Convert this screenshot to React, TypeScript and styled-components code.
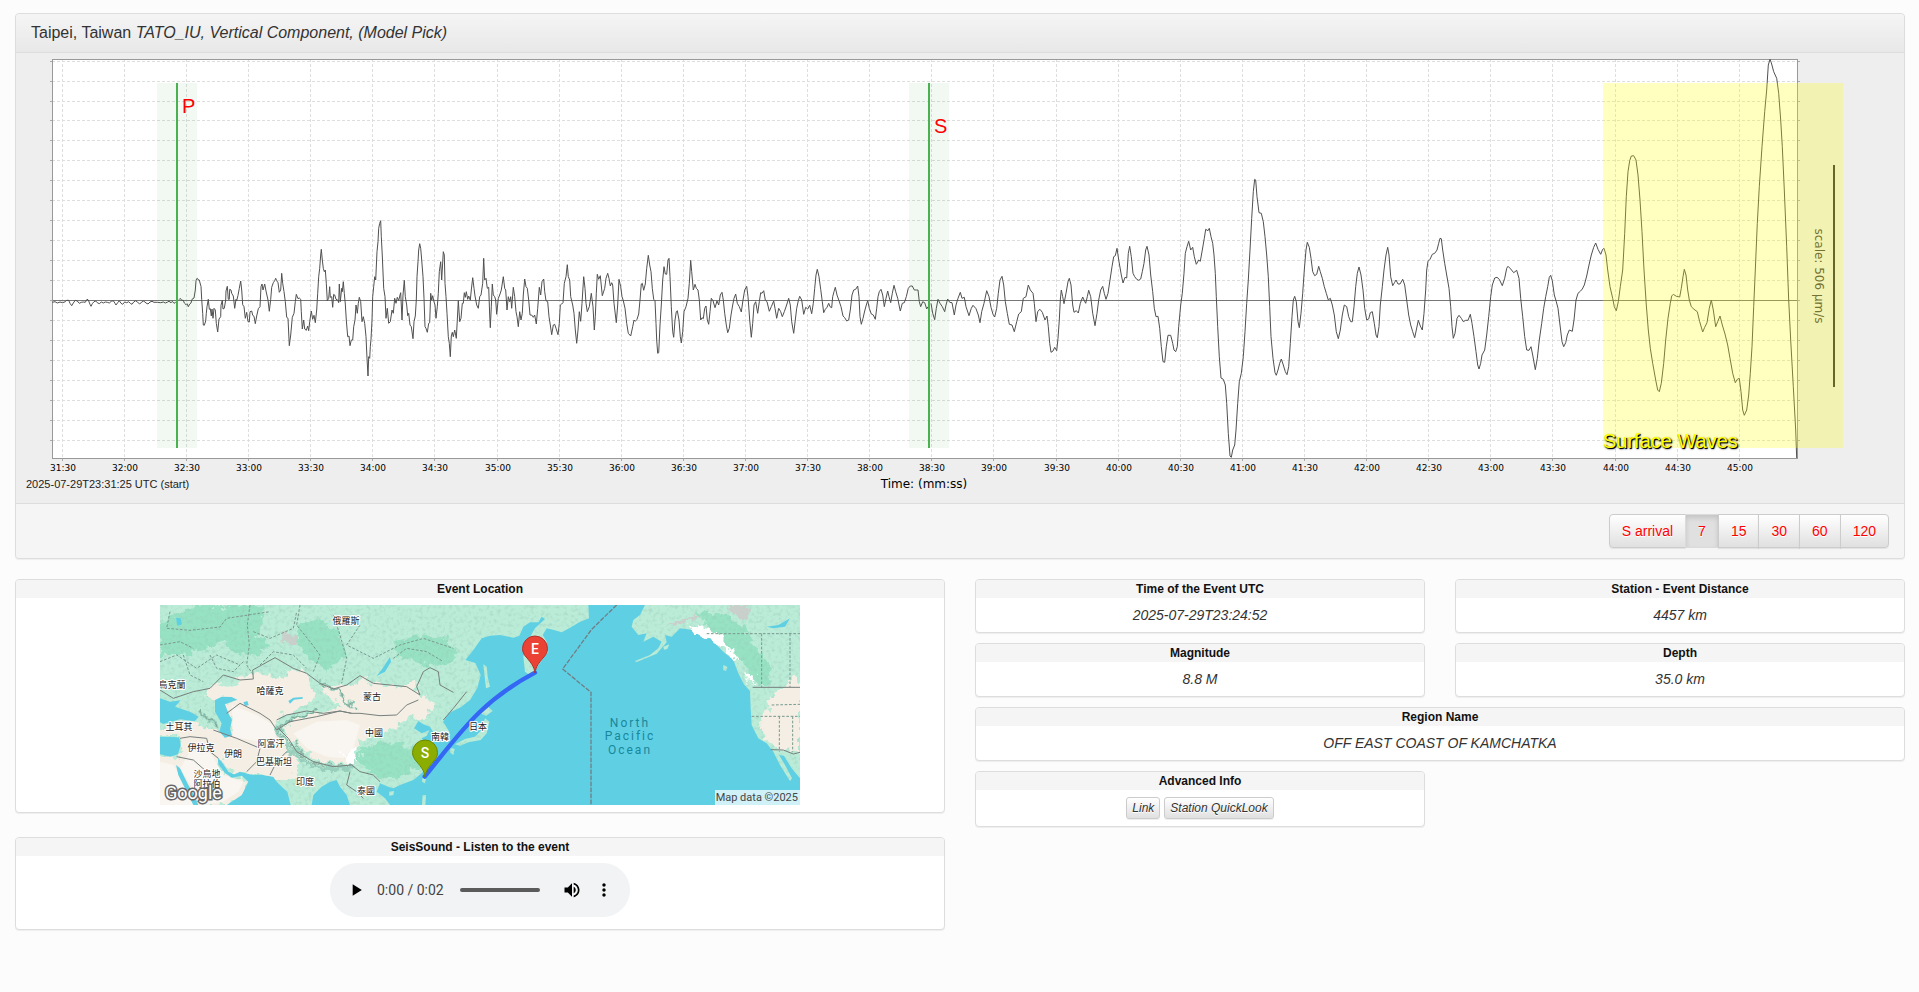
import React from "react";
import styled, { createGlobalStyle, css } from "styled-components";

const GlobalStyle = createGlobalStyle`
  *, *::before, *::after { box-sizing: border-box; }
  html { background: #fcfcfc; }
  body {
    margin: 0;
    background: #fcfcfc;
    color: #333;
    font: 14px/20px "Liberation Sans", Arial, sans-serif;
  }
  h1, h2, p { margin: 0; }
`;

const frame = css`
  border: 1px solid #ddd;
  border-radius: 4px;
  box-shadow: 0 1px 1px rgba(0, 0, 0, 0.06);
  overflow: hidden;
`;

const Page = styled.main`
  display: flex;
  flex-direction: column;
  gap: 20px;
  padding: 13px 14px 13px 15px;
`;

const Panel = styled.section`
  ${frame}
  background: #eee;
`;

const PanelHeader = styled.header`
  padding: 9px 15px;
  border-bottom: 1px solid #ddd;
  background: linear-gradient(#f5f5f5, #e8e8e8);
`;

const PanelTitle = styled.h1`
  font-size: 16px;
  font-weight: 400;
  line-height: 20px;
`;

const PanelFooter = styled.footer`
  display: flex;
  justify-content: flex-end;
  padding: 10px 15px;
  border-top: 1px solid #ddd;
  background: #f5f5f5;
`;

const Chart = styled.svg`
  display: block;
  width: 100%;
  height: auto;
`;

const BandLabel = styled.text`
  fill: #ff0;
  font: 20px "Liberation Sans", Arial, sans-serif;
  text-shadow: 1px 1px 0 #000, 1px 1px 2px #000;
`;

const ButtonGroup = styled.div`
  display: flex;
`;

const buttonFace = css`
  border: 1px solid #ccc;
  background: linear-gradient(#fff, #e0e0e0);
  text-shadow: 0 1px 0 #fff;
  box-shadow: inset 0 1px 0 rgba(255, 255, 255, 0.15), 0 1px 1px rgba(0, 0, 0, 0.075);
  cursor: pointer;
`;

const WindowButton = styled.button<{ $active?: boolean }>`
  ${buttonFace}
  margin: 0 0 0 -1px;
  padding: 6px 12px;
  color: #f00;
  font: 14px/20px "Liberation Sans", Arial, sans-serif;
  &:first-child { margin-left: 0; border-radius: 4px 0 0 4px; }
  &:last-child { border-radius: 0 4px 4px 0; }
  ${(p) =>
    p.$active &&
    css`
      background: #e0e0e0;
      border-color: #dbdbdb;
      box-shadow: inset 0 3px 5px rgba(0, 0, 0, 0.125);
    `}
`;

const Columns = styled.div`
  display: grid;
  grid-template-columns: 1fr 1fr;
  align-items: start;
  gap: 30px;
`;

const MediaColumn = styled.div`
  display: grid;
  gap: 24px;
`;

const FactGrid = styled.div`
  display: grid;
  grid-template-columns: 1fr 1fr;
  gap: 10px 30px;
`;

const CardFrame = styled.section<{ $wide?: boolean }>`
  ${frame}
  background: #fff;
  text-align: center;
  ${(p) => p.$wide && "grid-column: 1 / -1;"}
`;

const CardTitle = styled.h2`
  background: #f5f5f5;
  color: #111;
  font-size: 12px;
  font-weight: 700;
  line-height: 18px;
`;

const CardBody = styled.div<{ $bottom?: number }>`
  display: flex;
  justify-content: center;
  gap: 4px;
  padding: 7px 7px ${(p) => p.$bottom ?? 7}px;
`;

const Value = styled.p`
  font-style: italic;
`;

const SmallButton = styled.button`
  ${buttonFace}
  padding: 1px 5px;
  border-radius: 3px;
  color: #333;
  font: italic 12px/18px "Liberation Sans", Arial, sans-serif;
`;

const MapDrawing = styled.svg`
  display: block;
  width: 640px;
  max-width: 100%;
  height: auto;
`;

const Player = styled.div`
  display: flex;
  align-items: center;
  width: 300px;
  height: 54px;
  padding: 0 10px;
  border-radius: 27px;
  background: #f1f3f4;
`;

const IconButton = styled.button`
  display: grid;
  place-items: center;
  width: 32px;
  height: 32px;
  padding: 0;
  border: 0;
  background: none;
  cursor: pointer;
`;

const PlayerTime = styled.span`
  margin: 0 16px 0 5px;
  color: #444;
  font: 14px/20px Roboto, sans-serif;
  white-space: nowrap;
`;

const Seek = styled.input`
  flex: 1;
  min-width: 0;
  height: 4px;
  margin: 0 16px 0 0;
  border-radius: 2px;
  background: #5b5b5b;
  appearance: none;
  &::-webkit-slider-thumb { appearance: none; width: 0; height: 4px; }
`;

/* ---------- seismogram ---------- */

// Samples are x,y pairs at three units per chart pixel, relative to each segment's origin.
type Segment = { x: number; y: number; samples: string };

const beforeP: Segment[] = [
  {
    x: 40, y: 210,
    samples:
      "37,277 45,275 52,279 60,276 68,278 76,275 80,271 86,271 90,280 95,287 100,279 106,271 112,273 118,280 124,277 130,276 136,277 141,268 145,270 150,283 153,289 157,281 162,275 167,273 172,278 178,281 184,276 190,279 196,276 202,277 208,279 214,274 220,272 225,280 228,285 233,278 238,272 243,280 248,283 254,276 260,278 266,275 271,280 276,283 281,276 287,272 293,277 299,282 305,276 311,273 318,279 324,282 330,276 336,274 342,277 352,277 362,278 370,276 376,279 383,276 388,273 392,279 397,274 402,280 407,277",
  },
];

const betweenPAndS: Segment[] = [
  {
    x: 40, y: 210,
    samples:
      "417,269 421,265 425,271 430,271 433,279 438,284 441,281 445,290 449,282 453,279 456,268 462,264 466,240 468,212 470,206 472,205 474,209 478,210 481,222 483,229 485,268 488,310 490,345 493,346 497,333 499,310 501,290 505,268 508,298 511,296 514,318 516,297 519,325 522,295 526,300 529,340 533,366 537,327 542,320 543,286 547,271 549,297 553,295 557,270 558,243 562,229 565,268 568,268 569,238 573,240 575,250 580,258 584,295 588,268 590,272 594,256 598,235 602,213 605,240 608,284 612,290 616,325 620,307 624,335 628,336 630,305 635,303 638,316 642,319 646,341 650,318 655,296 660,290 663,230 666,222 669,240 674,222 678,243 684,270 688,304 692,268 695,232 700,218 704,212 707,205 710,212 714,218 718,247 722,240 725,190 728,220 732,245 736,275 740,322 744,325 748,407 752,375 757,322 762,310 766,275 769,253 774,266 778,264 782,268 784,305 787,357 791,330 794,357 799,361 803,348 806,362 809,335 814,303 818,328 822,316 826,338",
  },
  {
    x: 300, y: 180,
    samples:
      "50,390 53,340 56,290 59,265 62,225 64,208 67,240 70,265 73,275 76,270 79,310 82,362 86,355 89,320 91,352 95,350 98,382 101,343 104,345 108,358 113,360 116,368 118,312 121,365 125,325 127,335 130,305 133,340 136,372 139,420 143,470 147,468 150,497 154,480 158,480 161,440 165,420 168,375 172,400 175,370 178,352 182,365 186,425 190,410 194,430 198,470 201,535 204,588 206,530 209,535 211,500 213,478 216,420 218,350 221,320 224,290 227,300 231,215 234,185 236,145 239,130 242,122 244,170 247,228 251,325 255,350 258,415 262,385 266,430 271,425 276,390 280,400 284,355 288,370 292,352 296,362 300,345 302,338 306,420 309,345 313,301 316,350 320,375 323,407 326,400 330,435 334,440 339,476 342,425 346,408 349,360 351,290 354,245 356,210 359,191 362,205 365,240 369,290 372,355 375,440 378,445 382,457 386,430 389,428 392,340 395,360 398,347 401,362 405,375 408,415 412,380 415,340 418,275 422,245 425,300 430,215 433,225 435,310 438,350 441,400 445,470 448,490 451,530 454,468 457,457 460,470 464,450 469,475 472,420 475,362 479,425 483,415 487,370 490,370 493,338 496,352 499,335 503,358 506,348 511,360 514,330 518,293 522,325 525,348 530,375 535,385 539,350 543,345 548,310 551,235 554,300 558,295 562,325 566,322 569,405 571,443 574,380 577,312 580,345 584,350 587,360 590,403 595,355 599,345 604,330 610,290 614,325 617,330 621,390 625,350 629,365 632,350 635,385 640,322 644,350 648,395 651,410 655,440 659,395 663,420 667,400 670,345 674,297 678,320 682,325 686,360 690,405 695,405 700,412 704,405 709,432 713,385 718,322 722,345 726,305 731,297 734,335 738,362 743,365 747,410 751,435 755,464 760,435 764,433 768,445 774,464 778,430 781,375 785,372 789,368 793,310 798,290 802,254 805,290 809,300 812,350 818,375 822,400 826,450 830,490 834,450 838,395 842,424 846,370 851,290 855,325 858,370 862,395 868,380 874,340 879,380 883,450 886,410 889,340 892,283 896,298 901,287 907,347 914,325 918,295 923,280 927,295 931,318 935,308 938,315 942,370 949,428 953,375 957,298 962,320 966,350 970,362 975,385 980,430 985,460 992,468 998,440 1002,420 1006,424 1011,418 1016,402",
  },
  {
    x: 640, y: 180,
    samples:
      "0,360 4,312 7,310 11,331 16,312 20,265 25,226 29,255 33,275 37,325 41,358 45,362 48,430 50,480 53,520 56,518 60,435 64,375 68,300 72,260 76,282 80,283 84,240 87,235 90,290 94,380 98,455 101,472 105,420 109,395 112,392 117,420 121,470 124,489 128,455 132,395 138,380 144,355 148,310 152,241 155,275 160,330 165,313 169,325 174,330 178,360 182,420 186,413 190,416 194,385 198,378 202,420 206,433 210,395 214,355 219,362 225,383 231,363 236,375 241,345 246,337 250,360 254,400 259,435 263,458 268,445 273,405 278,375 282,355 287,342 292,370 298,380 304,396 309,360 314,330 320,319 324,350 329,420 334,472 338,430 342,375 347,365 353,400 358,365 362,338 366,340 371,332 376,360 381,365 388,394 394,380 401,363 405,385 410,415 416,385 422,395 427,410 433,395 439,378 446,355 451,375 455,425 461,460 466,420 470,385 475,362 479,349 485,360 491,403 497,382 503,387 509,376 515,401 520,370 524,325 528,285 532,268 537,290 542,328 547,365 551,398 556,388 561,382 566,370 570,380 575,383 578,350 582,335 586,322 591,345 597,362 603,380 609,408 614,413 620,423 626,420 631,390 636,345 641,330 647,328 653,318 657,350 660,410 664,433 669,415 674,393 679,375 683,362 688,385 694,402 700,405 706,418 710,385 714,350 718,335 723,328 728,345 733,380 738,355 743,333 747,350 752,368 757,340 762,316 767,335 773,355 777,375 781,393 787,370 793,368 799,350 805,325 811,318 817,318 823,330 829,330 834,330 838,365 842,380 848,365 854,368 860,387 864,380",
  },
];

const afterS: Segment[] = [
  {
    x: 640, y: 180,
    samples:
      "873,370 878,400 884,419 889,385 894,358 900,370 907,380 914,395 918,375 923,357 929,367 936,368 943,405 948,375 954,355 961,337 966,355 973,352 978,380 987,407 994,385 999,376 1008,386 1015,405 1020,428 1025,395 1032,370 1040,332 1047,350 1053,382 1059,403 1064,411 1070,385 1075,340 1080,300 1086,289 1091,315 1096,365 1102,400 1108,433 1116,435 1123,455 1130,425 1136,402 1144,395 1150,355 1158,350 1165,315 1171,330 1179,340 1183,370 1188,425 1193,395 1198,389",
  },
  {
    x: 1000, y: 150,
    samples:
      "120,478 127,487 135,510 141,498 145,530 149,580 153,607 159,603 164,592 170,602 174,565 178,510 181,450 184,420 188,440 192,461 198,430 204,395 208,385 213,405 218,465 222,487 229,482 235,489 241,460 248,441 252,450 257,460 262,440 266,421 272,440 278,490 285,527 291,490 296,450 302,420 308,409 313,430 318,448 324,430 330,390 336,350 341,320 346,317 351,295 357,335 364,375 369,399 375,382 380,384 385,310 389,289 394,320 399,370 404,380 410,388 416,391 422,387 427,365 432,340 437,300 441,289 447,315 452,375 458,425 463,475 468,500 474,499 479,535 484,590 489,635 494,637 499,590 504,556 512,556 518,580 522,600 527,605 532,590 536,530 542,465 547,430 552,370 556,310 561,290 566,274 572,300 578,292 583,320 589,343 596,330 601,334 607,300 613,265 617,238 624,242 628,235 633,260 638,280 642,315 646,370 649,440 653,530 658,620 663,684 670,688 676,705 680,760 685,850 690,918 694,922 698,900 704,885 708,840 713,760 718,695 724,670 730,620 735,545 740,460 745,390 750,300 755,205 760,125 764,88 767,90 771,140 777,188 784,190 790,215 795,260 800,315 805,380 809,470 813,560 819,625 825,668 829,676 834,660 839,640 844,627 850,645 856,665 861,674 866,650 871,580 876,500 880,450 884,439 889,455 894,515 898,533 903,490 908,430 913,360 918,300 922,277 928,292 933,325 938,365 944,377 950,373 956,349 961,365 967,385 973,410 979,430 985,450 991,445 997,465 1003,495 1009,545 1015,566 1021,540 1027,495 1033,465 1040,470 1046,500 1052,515 1057,515 1062,470 1067,410 1072,370 1077,351 1083,375 1089,420 1094,475 1100,510 1106,507 1111,488 1117,485 1123,520 1128,555 1132,563 1137,530 1141,465 1147,410 1152,360 1158,315 1163,292 1167,315 1172,380 1178,407 1184,397 1188,390 1194,402 1200,402 1208,388 1214,405 1220,450 1226,495 1232,525 1238,545 1244,563 1249,540 1255,511 1261,528 1267,540 1272,490 1277,420 1280,360 1284,334 1290,328 1297,313 1304,310 1311,300 1316,280",
  },
  {
    x: 1400, y: 40,
    samples:
      "120,595 124,596 128,630 134,670 140,705 147,745 152,800 156,860 160,895 165,880 171,835 177,826 184,835 190,845 197,841 204,841 211,823 216,850 222,890 228,935 233,975 237,987 242,970 246,945 254,930 260,885 266,830 272,770 277,735 284,714 291,712 298,718 307,737 314,715 320,685 324,679 332,687 341,698 350,691 357,715 362,775 368,830 374,890 380,930 387,931 393,920 398,945 406,989 412,955 418,900 425,850 431,805 437,770 443,740 448,712 452,706 457,722 463,765 469,785 474,805 480,855 486,905 491,920 497,908 502,885 508,870 517,874 522,840 528,780 534,760 541,754 547,747 553,735 560,708 567,675 574,645 581,622 587,609 594,628 602,643 608,628 612,625 618,645 623,690 630,740 638,775 643,800 649,812 655,785 661,740 668,690 674,580 679,470 684,395 689,362 694,348 701,347 708,360 714,405 720,480 726,575 732,690 739,795 745,870 751,925 758,970 767,1020 773,1050 778,1055 784,1030 791,970 797,900 804,835 811,790 815,768 820,763 829,769 839,771 844,745 849,710 853,688 858,705 863,750 868,780 874,800 882,808 892,815 899,845 908,876 914,862 921,848 928,805 934,780 940,810 947,860 953,845 960,828 967,855 975,882 983,915 990,955 998,1000 1006,1028 1012,1018 1018,1015 1023,1055 1028,1110 1033,1126 1040,1110 1046,1065 1051,1000 1056,920 1061,800 1066,690 1072,550 1078,440 1086,320 1094,215 1100,150 1105,75 1110,58 1114,68 1121,95 1130,115 1136,160 1142,240 1147,320 1153,450 1160,620 1166,780 1172,900 1180,1040 1187,1170 1190,1254",
  },
];

const toPoints = (segments: Segment[]) =>
  segments
    .flatMap((s) =>
      s.samples.split(" ").map((pair) => {
        const [x, y] = pair.split(",").map(Number);
        return `${(s.x + x / 3).toFixed(1)},${(s.y + y / 3).toFixed(1)}`;
      })
    )
    .join(" ");

const PLOT = { left: 52, right: 1797, top: 59, bottom: 458 };

const timeTicks = Array.from({ length: 28 }, (_, i) => {
  const seconds = 31 * 60 + 30 + i * 30;
  return {
    x: Math.floor(62.3 + 62.11 * i),
    label: `${Math.floor(seconds / 60)}:${seconds % 60 === 0 ? "00" : "30"}`,
  };
});

const amplitudeTicks = [61, 81, 101, ...Array.from({ length: 17 }, (_, i) => 120 + i * 20)];

const Arrival = ({ x, name, y }: { x: number; name: string; y: number }) => (
  <g>
    <rect x={x - 20} y="83" width="40" height="365" fill="#4caf50" fillOpacity="0.07" />
    <rect x={x - 1} y="83" width="2" height="365" fill="#4bb050" />
    <text x={x + 5} y={y} fill="#f00" fontSize="20" fontFamily="Liberation Sans, Arial, sans-serif">
      {name}
    </text>
  </g>
);

const Seismogram = () => (
  <Chart viewBox="16 53 1888 450" role="img" aria-label="Seismogram of vertical ground motion">
    <rect x={PLOT.left} y={PLOT.top} width={PLOT.right - PLOT.left} height={PLOT.bottom - PLOT.top} fill="#fff" />
    <g shapeRendering="crispEdges" fill="none">
      <g stroke="#dedede" strokeDasharray="3 2">
        {amplitudeTicks.map((y) => (
          <path key={y} d={`M${PLOT.left} ${y + 0.5}H${PLOT.right}`} />
        ))}
        {timeTicks.map((t) => (
          <path key={t.label} d={`M${t.x + 0.5} ${PLOT.top}V${PLOT.bottom}`} />
        ))}
      </g>
      <g stroke="#aaa">
        {amplitudeTicks.map((y) => (
          <path key={y} d={`M50 ${y + 0.5}H52M1798 ${y + 0.5}H1800`} />
        ))}
        {timeTicks.map((t) => (
          <path key={t.label} d={`M${t.x + 0.5} 459V461`} />
        ))}
      </g>
      <path d="M52 300.5H1797" stroke="#777" />
      <path d="M52.5 59.5H1797.5V458.5H52.5Z" stroke="#999" />
    </g>
    <g fill="none" stroke="#505050" strokeWidth="1" strokeLinejoin="round">
      <polyline points={toPoints(beforeP)} />
      <polyline points={toPoints(betweenPAndS)} />
      <polyline points={toPoints(afterS)} />
    </g>
    <g fontFamily="DejaVu Sans, sans-serif" fill="#000" textAnchor="middle">
      {timeTicks.map((t) => (
        <text key={t.label} x={t.x + 1} y="471" fontSize="9">
          {t.label}
        </text>
      ))}
      <text x="924" y="488" fontSize="12">
        Time: (mm:ss)
      </text>
      <text fontSize="12" fill="#444" transform="translate(1815 276) rotate(90)">
        scale: 506 µm/s
      </text>
    </g>
    <rect x="1833" y="165" width="2" height="222" fill="#333" />
    <text x="26" y="488" fontSize="11" fontFamily="Liberation Sans, Arial, sans-serif" fill="#222">
      2025-07-29T23:31:25 UTC (start)
    </text>
    <Arrival x={177} name="P" y={113} />
    <Arrival x={929} name="S" y={133} />
    <rect x="1603" y="83" width="240" height="365" fill="#ff0" fillOpacity="0.25" />
    <BandLabel x="1603" y="448">
      Surface Waves
    </BandLabel>
  </Chart>
);

/* ---------- map ---------- */

const eurasia =
  "0,0 1285,0 1287,40 1260,50 1230,68 1205,82 1182,75 1160,70 1148,90 1160,110 1165,140 1150,160 1125,195 1112,212 1095,200 1090,155 1105,105 1125,70 1155,42 1145,35 1135,52 1110,52 1090,65 1078,92 1060,98 1020,90 990,92 965,100 940,135 916,165 946,174 962,210 952,249 930,285 903,306 867,324 849,350 868,380 862,408 832,412 822,385 810,365 790,358 775,348 762,370 785,385 808,376 800,392 785,400 798,420 810,440 812,470 785,505 760,525 720,540 700,550 685,545 660,535 650,560 675,580 690,600 570,600 560,570 540,545 530,525 510,530 485,545 460,570 455,600 392,600 382,560 370,550 350,530 340,515 310,510 270,508 240,500 222,508 205,500 185,470 173,457 175,478 195,505 215,518 245,512 265,530 245,570 200,600 0,600";

const northAmerica =
  "1455,0 1440,30 1420,45 1415,65 1435,90 1460,85 1450,110 1480,95 1505,110 1495,130 1470,150 1425,168 1428,172 1490,146 1520,112 1515,90 1535,95 1560,70 1600,75 1640,90 1665,115 1690,140 1720,165 1735,205 1752,238 1770,258 1772,310 1775,360 1795,400 1820,415 1840,440 1860,480 1890,528 1896,520 1875,480 1857,450 1872,452 1895,490 1920,520 1920,0";

const deserts = [
  "160,235 220,236 280,202 300,215 340,210 370,220 380,190 435,195 445,235 470,268 440,290 420,315 380,325 350,345 340,375 360,385 400,440 415,480 400,520 350,530 270,508 240,500 205,500 175,460 175,480 215,518 265,530 245,570 200,600 0,600 0,455 60,455 62,400 0,392 0,365 60,345 110,350 160,375 210,400 215,345 190,300 220,290 160,285 130,270",
  "480,235 520,240 560,235 610,225 670,240 730,245 760,230 775,265 820,285 822,310 800,335 740,340 715,360 670,385 610,400 580,440 560,470 530,475 490,472 430,440 395,405 372,370 385,345 490,322 540,315 520,285 500,265",
  "1835,275 1860,250 1900,215 1920,205 1920,440 1850,430 1815,400 1800,350 1815,320",
];

const forests = [
  "0,60 60,20 110,0 290,0 320,40 290,90 330,120 300,150 220,140 180,110 120,140 60,150 0,150",
  "420,60 480,40 540,80 560,150 500,200 450,160 400,110",
  "700,110 780,90 860,100 890,150 840,190 760,170 720,160",
  "1600,20 1700,30 1760,80 1800,140 1840,190 1830,240 1790,230 1740,160 1680,100",
  "600,430 680,410 760,430 780,480 720,520 640,510 600,480",
];

const lakes = [
  "0,280 30,290 62,286 45,305 90,320 116,335 104,349 60,343 10,357 0,352",
  "165,285 185,275 215,276 232,284 195,298 205,325 216,345 210,372 216,392 195,398 178,380 185,355 165,320",
  "0,395 58,397 62,420 54,448 30,455 0,448",
  "690,155 693,170 675,200 650,213 668,190",
  "385,288 400,278 428,276 428,281 402,284 390,296",
  "48,480 60,490 85,540 105,575 115,600 100,600 80,560 55,510",
  "250,292 262,288 266,300 255,303",
  "48,38 62,40 66,58 52,62",
  "1820,65 1855,60 1890,40 1875,65 1840,70",
];

const islands = [
  "970,178 980,185 983,215 990,245 978,250 974,215",
  "965,312 985,306 998,318 978,332 964,326",
  "975,340 988,350 980,385 962,405 925,412 900,422 885,418 915,402 945,395 965,375",
  "872,428 884,432 880,450 870,442",
  "788,518 798,520 795,535 786,530",
  "788,570 798,570 796,600 786,600",
  "688,560 702,558 700,570 688,572",
  "1510,125 1528,118 1522,132 1512,134",
  "1690,180 1702,186 1698,198 1690,195",
];

const borders = [
  "0,255 40,280 100,260 150,250 190,210 240,225 280,222 278,195 345,158 400,190 440,205 480,235 520,252 560,240 600,212 640,235 690,240 740,245 780,270 770,245 790,200 810,188 835,200 840,240 880,262",
  "160,375 230,400 300,430 290,470 260,500",
  "200,325 240,295 300,325 330,345 350,375 390,350 470,335 540,318 575,325 600,325 660,332 710,330 740,300 775,285",
  "350,345 380,330 440,318 490,325 540,318 575,325",
  "355,370 385,400 410,440 460,470 520,485 575,480 600,500 640,510 660,530",
  "60,400 90,395 140,400 150,440 175,460",
  "50,455 100,465 140,500 165,505",
  "380,440 350,470 330,510",
  "570,500 560,540 590,560 610,580",
  "850,345 880,310 920,260",
  "1778,247 1920,247",
  "1832,434 1870,435 1900,447 1920,442",
];

const dashedBorders = [
  "270,0 262,60 268,120 260,180 280,210",
  "30,20 20,70 90,76 180,66 200,40 330,20",
  "0,170 50,150 110,190 170,150 240,180",
  "70,150 90,210 130,230",
  "0,120 60,110 100,130",
  "150,150 170,190 220,200 250,170",
  "280,80 330,100 400,70 410,20",
  "300,180 340,140 400,150 440,190",
  "420,0 410,60 450,110 480,150 460,200",
  "520,30 540,90 560,160 545,235",
  "600,60 560,120 640,160 720,120 790,100 880,130",
  "700,160 740,130 800,140 850,170",
  "1640,86 1920,86",
  "1805,86 1805,247",
  "1890,86 1890,247",
  "1775,334 1920,334",
  "1858,334 1858,440",
  "1835,300 1920,298",
  "1898,334 1898,440",
];

const places: [string, number, number][] = [
  ["俄羅斯", 186, 19],
  ["烏克蘭", 12, 83],
  ["哈薩克", 110, 89],
  ["蒙古", 212, 95],
  ["土耳其", 19, 125],
  ["伊拉克", 41, 146],
  ["伊朗", 73, 152],
  ["阿富汗", 111, 142],
  ["巴基斯坦", 114, 160],
  ["中國", 214, 131],
  ["南韓", 280, 135],
  ["日本", 318, 125],
  ["印度", 145, 180],
  ["泰國", 206, 189],
  ["沙烏地", 47, 172],
  ["阿拉伯", 47, 182],
];

const Pin = ({ x, y, letter, fill, edge }: { x: number; y: number; letter: string; fill: string; edge: string }) => (
  <g transform={`translate(${x} ${y})`}>
    <path
      d="M0 0C-1 -7 -4 -10 -8 -15C-11 -18 -12.5 -21 -12.5 -24.500A12.500 12.500 0 0 1 12.500 -24.500C12.500 -21 11 -18 8 -15C4 -10 1 -7 0 0Z"
      fill={fill}
      stroke={edge}
    />
    <text y="-19" fill="#fff" fontSize="14" fontWeight="500" fontFamily="Roboto, sans-serif" textAnchor="middle">
      {letter}
    </text>
  </g>
);

const polygons = (shapes: string[], fill: string) =>
  shapes.map((points) => <polygon key={points} points={points} fill={fill} />);

const EventMap = () => (
  <MapDrawing viewBox="0 0 640 200" role="img" aria-label="Map of the station and the event">
    <rect width="640" height="200" fill="#5fd0e4" />
    <svg width="640" height="200" viewBox="0 0 1920 600">
      <defs>
        <filter id="relief" x="0" y="0" width="100%" height="100%">
          <feTurbulence type="fractalNoise" baseFrequency="0.09" numOctaves="3" seed="8" result="noise" />
          <feColorMatrix in="noise" type="matrix" values="0 0 0 0 0.3  0 0 0 0 0.58  0 0 0 0 0.48  1.2 0 0 0 -0.56" />
          <feComposite in2="SourceGraphic" operator="in" result="shade" />
          <feMerge>
            <feMergeNode in="SourceGraphic" />
            <feMergeNode in="shade" />
          </feMerge>
        </filter>
        <filter id="ragged" x="-5%" y="-5%" width="110%" height="110%">
          <feTurbulence type="fractalNoise" baseFrequency="0.04" numOctaves="3" seed="3" />
          <feDisplacementMap in="SourceGraphic" scale="45" xChannelSelector="R" yChannelSelector="G" />
        </filter>
        <clipPath id="land">
          <polygon points={eurasia} />
          <polygon points={northAmerica} />
        </clipPath>
      </defs>
      <g filter="url(#relief)">
        <polygon points={eurasia} fill="#bbecd8" />
        <polygon points={northAmerica} fill="#bbecd8" />
        {polygons(islands, "#bbecd8")}
        <g clipPath="url(#land)">
          <g filter="url(#ragged)">{polygons(forests, "#97e2c3")}</g>
        </g>
      </g>
      <g clipPath="url(#land)">
        <g filter="url(#ragged)">{polygons(deserts, "#f4eee4")}</g>
      </g>
      <g fill="#f9f5f0">
        <polygon points="0,470 40,480 90,560 100,600 0,600" />
        <polygon points="90,440 150,440 190,510 250,530 235,560 190,590 130,600 60,490" />
        <polygon points="400,385 470,350 560,345 600,360 580,430 550,460 500,455 440,430" />
        <polygon points="215,300 290,330 340,360 350,420 300,410 220,395" />
      </g>
      <g fill="#fff" filter="url(#ragged)">
        <polygon points="1585,60 1640,65 1680,95 1720,140 1735,165 1700,140 1650,100 1600,85" />
        <polygon points="1515,70 1560,40 1620,30 1600,45 1540,60" fill="#c9cfcb" />
        <polygon points="1700,0 1760,0 1765,50 1735,40" fill="#c9cfcb" />
        <polygon points="545,445 580,430 600,470 570,485" />
        <polygon points="1750,205 1790,215 1780,235" />
      </g>
      <polygon points="355,100 380,80 410,95 395,120 370,118" fill="#c9cfcb" filter="url(#ragged)" />
      {polygons(lakes, "#5fd0e4")}
      <g fill="none" strokeLinejoin="round">
        <g stroke="#8fc9b5" strokeWidth="12" strokeOpacity="0.8" filter="url(#ragged)">
          <polyline points="345,370 375,405 400,445 450,478 520,495 575,490" />
          <polyline points="360,370 400,340 470,320" />
          <polyline points="110,320 150,345 180,365" />
          <polyline points="480,225 540,270 580,310" />
        </g>
        <g stroke="#6f8f85" strokeWidth="4" strokeOpacity="0.6" filter="url(#ragged)">
          <polyline points="355,370 385,400 410,440 460,470 520,485 575,480" />
          <polyline points="360,370 400,340 470,320" />
          <polyline points="110,320 150,345 180,365" />
          <polyline points="480,225 540,270 580,310" />
        </g>
        <g stroke="#777f7c" strokeWidth="3">
          {borders.map((points) => (
            <polyline key={points} points={points} />
          ))}
        </g>
        <g stroke="#7a988f" strokeWidth="3" strokeDasharray="8 5">
          {dashedBorders.map((points) => (
            <polyline key={points} points={points} />
          ))}
        </g>
        <polyline points="1370,0 1295,73 1208,192 1293,262 1293,600" stroke="#6f7f85" strokeWidth="4" strokeDasharray="14 4" />
        <path d="M794 515C900 385 960 290 1125 203" stroke="#3367f4" strokeWidth="13" strokeLinecap="round" />
      </g>
    </svg>
    <g
      fill="#222"
      stroke="#fff"
      strokeWidth="2"
      strokeLinejoin="round"
      paintOrder="stroke"
      fontSize="9"
      fontFamily="Noto Sans CJK TC, sans-serif"
      textAnchor="middle"
    >
      {places.map(([name, x, y]) => (
        <text key={name} x={x} y={y}>
          {name}
        </text>
      ))}
    </g>
    <g fill="#17879b" fontSize="12" fontFamily="Roboto, sans-serif" letterSpacing="2" textAnchor="middle">
      <text x="470" y="122">North</text>
      <text x="470" y="135">Pacific</text>
      <text x="470" y="149">Ocean</text>
    </g>
    <Pin x={265} y={172} letter="S" fill="#8bad00" edge="#6c8800" />
    <Pin x={375} y={68} letter="E" fill="#ea4335" edge="#b5302a" />
    <text
      x="5"
      y="194"
      fill="#fff"
      stroke="#666"
      strokeWidth="3"
      paintOrder="stroke"
      fontSize="18"
      fontFamily="Roboto, sans-serif"
    >
      Google
    </text>
    <rect x="555" y="185" width="85" height="15" fill="#fff" fillOpacity="0.7" />
    <text x="638" y="196" fill="#444" fontSize="11" fontFamily="Roboto, sans-serif" textAnchor="end">
      Map data ©2025
    </text>
  </MapDrawing>
);

/* ---------- page ---------- */

const Card = ({ title, wide, bottom, children }: { title: string; wide?: boolean; bottom?: number; children: React.ReactNode }) => (
  <CardFrame $wide={wide}>
    <CardTitle>{title}</CardTitle>
    <CardBody $bottom={bottom}>{children}</CardBody>
  </CardFrame>
);

const windows = ["S arrival", "7", "15", "30", "60", "120"];

export default function App() {
  const [active, setActive] = React.useState("7");
  return (
    <>
      <GlobalStyle />
      <Page>
        <Panel>
          <PanelHeader>
            <PanelTitle>
              Taipei, Taiwan <em>TATO_IU, Vertical Component, (Model Pick)</em>
            </PanelTitle>
          </PanelHeader>
          <Seismogram />
          <PanelFooter>
            <ButtonGroup role="group" aria-label="Time window">
              {windows.map((w) => (
                <WindowButton key={w} type="button" $active={w === active} aria-pressed={w === active} onClick={() => setActive(w)}>
                  {w}
                </WindowButton>
              ))}
            </ButtonGroup>
          </PanelFooter>
        </Panel>
        <Columns>
          <MediaColumn>
            <Card title="Event Location">
              <EventMap />
            </Card>
            <Card title="SeisSound - Listen to the event" bottom={12}>
              <Player>
                <IconButton type="button" aria-label="Play">
                  <svg width="20" height="20" viewBox="0 0 24 24">
                    <path d="M8 5v14l11-7z" />
                  </svg>
                </IconButton>
                <PlayerTime>0:00 / 0:02</PlayerTime>
                <Seek type="range" min="0" max="2" defaultValue="0" aria-label="Position" />
                <IconButton type="button" aria-label="Mute">
                  <svg width="20" height="20" viewBox="0 0 24 24">
                    <path d="M3 9v6h4l5 5V4L7 9H3zm13.500 3c0-1.770-1.020-3.290-2.500-4.030v8.050c1.480-.73 2.500-2.250 2.500-4.020zM14 3.230v2.060c2.890.86 5 3.540 5 6.710s-2.110 5.850-5 6.710v2.060c4.010-.91 7-4.490 7-8.770s-2.990-7.860-7-8.770z" />
                  </svg>
                </IconButton>
                <IconButton type="button" aria-label="More options">
                  <svg width="20" height="20" viewBox="0 0 24 24">
                    <path d="M12 8c1.100 0 2-.9 2-2s-.9-2-2-2-2 .9-2 2 .9 2 2 2zm0 2c-1.100 0-2 .9-2 2s.9 2 2 2 2-.9 2-2-.9-2-2-2zm0 6c-1.100 0-2 .9-2 2s.9 2 2 2 2-.9 2-2-.9-2-2-2z" />
                  </svg>
                </IconButton>
              </Player>
            </Card>
          </MediaColumn>
          <FactGrid>
            <Card title="Time of the Event UTC">
              <Value>2025-07-29T23:24:52</Value>
            </Card>
            <Card title="Station - Event Distance">
              <Value>4457 km</Value>
            </Card>
            <Card title="Magnitude">
              <Value>8.8 M</Value>
            </Card>
            <Card title="Depth">
              <Value>35.0 km</Value>
            </Card>
            <Card title="Region Name" wide>
              <Value>OFF EAST COAST OF KAMCHATKA</Value>
            </Card>
            <Card title="Advanced Info">
              <SmallButton type="button">Link</SmallButton>
              <SmallButton type="button">Station QuickLook</SmallButton>
            </Card>
          </FactGrid>
        </Columns>
      </Page>
    </>
  );
}
